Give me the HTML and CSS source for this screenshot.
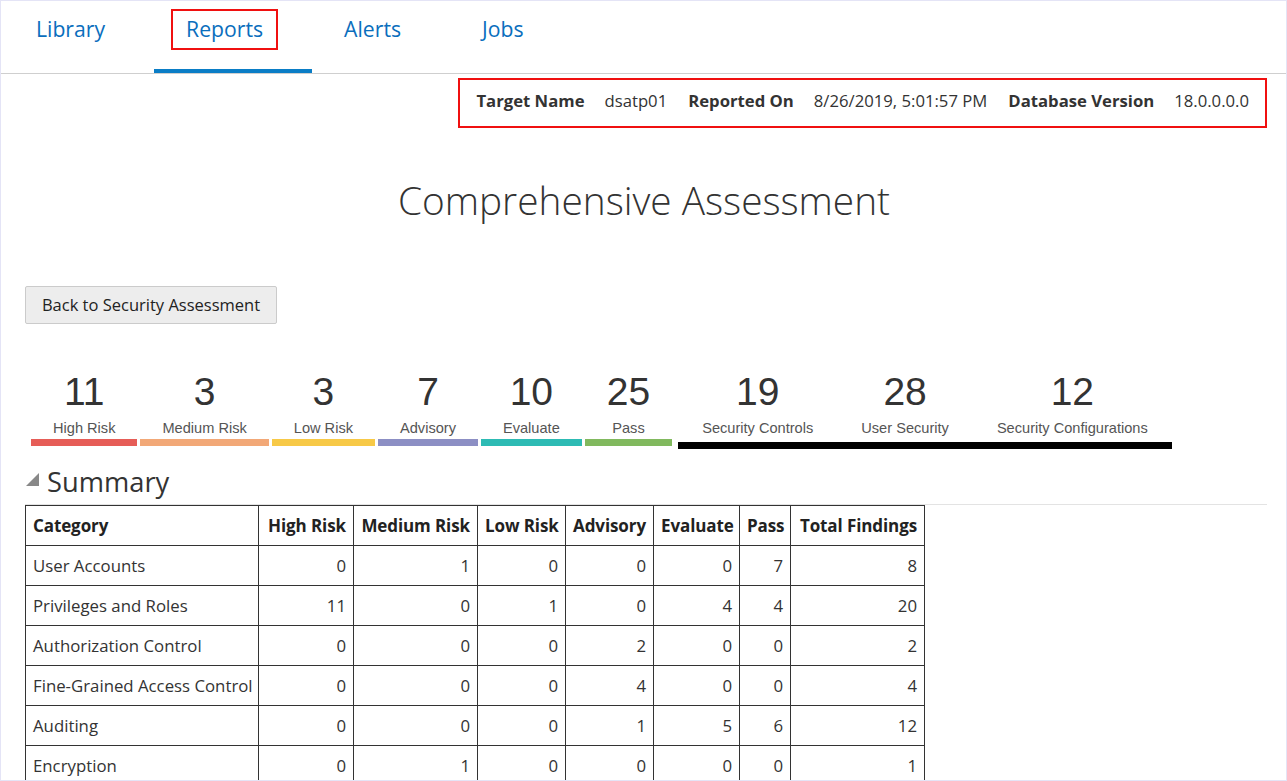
FILE: index.html
```html
<!DOCTYPE html>
<html lang="en">
<head>
<meta charset="utf-8">
<title>Comprehensive Assessment</title>
<link rel="stylesheet" href="styles.css">
</head>
<body>
<div class="page">
  <nav class="tabs">
    <a class="tab">Library</a>
    <a class="tab active"><span class="mark">Reports</span></a>
    <a class="tab">Alerts</a>
    <a class="tab">Jobs</a>
  </nav>
  <main class="content">
    <div class="info-row">
      <div class="info">
        <span class="lbl">Target Name</span><span class="val">dsatp01</span>
        <span class="lbl">Reported On</span><span class="val">8/26/2019, 5:01:57 PM</span>
        <span class="lbl">Database Version</span><span class="val last">18.0.0.0.0</span>
      </div>
    </div>
    <h1 class="title">Comprehensive Assessment</h1>
    <button class="back">Back to Security Assessment</button>
    <div class="stats">
      <div class="stat c-high"><div class="num">11</div><div class="cap">High Risk</div></div>
      <div class="stat c-med"><div class="num">3</div><div class="cap">Medium Risk</div></div>
      <div class="stat c-low"><div class="num">3</div><div class="cap">Low Risk</div></div>
      <div class="stat c-adv"><div class="num">7</div><div class="cap">Advisory</div></div>
      <div class="stat c-eval"><div class="num">10</div><div class="cap">Evaluate</div></div>
      <div class="stat c-pass"><div class="num">25</div><div class="cap">Pass</div></div>
      <div class="group">
        <div class="gstat"><div class="num">19</div><div class="cap">Security Controls</div></div>
        <div class="gstat"><div class="num">28</div><div class="cap">User Security</div></div>
        <div class="gstat"><div class="num">12</div><div class="cap">Security Configurations</div></div>
      </div>
    </div>
    <h2 class="section"><span class="tri"></span>Summary</h2>
    <table class="summary">
      <colgroup>
        <col class="w1"><col class="w2"><col class="w3"><col class="w4"><col class="w5"><col class="w6"><col class="w7"><col class="w8">
      </colgroup>
      <thead>
        <tr><th class="left">Category</th><th>High Risk</th><th>Medium Risk</th><th>Low Risk</th><th>Advisory</th><th>Evaluate</th><th>Pass</th><th>Total Findings</th></tr>
      </thead>
      <tbody>
        <tr><td class="left">User Accounts</td><td>0</td><td>1</td><td>0</td><td>0</td><td>0</td><td>7</td><td>8</td></tr>
        <tr><td class="left">Privileges and Roles</td><td>11</td><td>0</td><td>1</td><td>0</td><td>4</td><td>4</td><td>20</td></tr>
        <tr><td class="left">Authorization Control</td><td>0</td><td>0</td><td>0</td><td>2</td><td>0</td><td>0</td><td>2</td></tr>
        <tr><td class="left">Fine-Grained Access Control</td><td>0</td><td>0</td><td>0</td><td>4</td><td>0</td><td>0</td><td>4</td></tr>
        <tr><td class="left">Auditing</td><td>0</td><td>0</td><td>0</td><td>1</td><td>5</td><td>6</td><td>12</td></tr>
        <tr><td class="left">Encryption</td><td>0</td><td>1</td><td>0</td><td>0</td><td>0</td><td>0</td><td>1</td></tr>
      </tbody>
    </table>
  </main>
</div>
</body>
</html>
```
FILE: styles.css
```css
* { box-sizing: border-box; }
html, body { margin: 0; padding: 0; background: #fff; }
body { font-family: "Open Sans", "Noto Sans", "DejaVu Sans", sans-serif; color: #333; }

.page {
  width: 1287px;
  height: 781px;
  border: 1px solid #e4e4f6;
  overflow: hidden;
  background: #fff;
}

/* tabs */
.tabs {
  height: 73px;
  border-bottom: 1px solid #cfcfcf;
  display: flex;
  align-items: flex-start;
  padding-left: 35px;
  gap: 81px;
}
.tab {
  position: relative;
  display: block;
  height: 72px;
  padding-top: 13px;
  font-size: 21.2px;
  line-height: 30px;
  color: #0a6ebd;
}
.tab.active::after {
  content: "";
  position: absolute;
  left: -32px;
  width: 158px;
  bottom: 0;
  height: 4px;
  background: #0a7dc6;
}
.mark {
  display: inline-block;
  border: 2px solid #f01010;
  padding: 3px 13px 4px;
  margin: -5px -15px 0;
  line-height: 30px;
}

/* content */
.content { padding: 0 19px 0 24px; }

.info-row { display: flex; justify-content: flex-end; padding-top: 4px; }
.info {
  height: 50px;
  border: 2px solid #f01010;
  display: flex;
  align-items: center;
  padding: 0 16px 5px 16px;
  font-size: 16.7px;
  white-space: nowrap;
}
.info .lbl { font-weight: 700; margin-right: 20px; }
.info .val { margin-right: 21px; }
.info .val.last { margin-right: 0; }

.title {
  margin: 46px 0 0;
  text-align: center;
  font-weight: 300;
  font-size: 38.8px;
  line-height: 52px;
  color: #333;
  padding-right: 4px;
}

.back {
  display: block;
  margin-top: 60px;
  height: 38px;
  width: 252px;
  padding: 0 0 1px;
  background: #ededed;
  border: 1px solid #cbcbcb;
  border-radius: 2px;
  font-family: "Open Sans", "Noto Sans", sans-serif;
  font-size: 16.5px;
  color: #222;
}

/* stats */
.stats {
  display: flex;
  align-items: flex-start;
  margin-top: 48px;
  padding-left: 6px;
  font-family: "Liberation Sans", Arial, sans-serif;
}
.stat {
  padding: 0 22px;
  margin-right: 3px;
  text-align: center;
  border-bottom: 7px solid #ccc;
  white-space: nowrap;
}
.num {
  font-size: 39px;
  line-height: 40px;
  color: #333;
}
.cap {
  font-size: 14.6px;
  line-height: 18px;
  color: #555;
  padding-top: 7px;
  padding-bottom: 2px;
}
.c-high { border-bottom-color: #e65d57; }
.c-med  { border-bottom-color: #f2a877; }
.c-low  { border-bottom-color: #f7c947; }
.c-adv  { border-bottom-color: #8c8fc4; }
.c-eval { border-bottom-color: #2dbbb4; }
.c-pass { border-bottom-color: #81b95e; }

.group {
  display: flex;
  margin-left: 3px;
  border-bottom: 7px solid #000;
  padding-bottom: 5px;
}
.gstat {
  padding: 0 24px;
  text-align: center;
  white-space: nowrap;
}
.gstat .cap { padding-bottom: 0; }

/* summary */
.section {
  margin: 16px 0 0;
  font-weight: 400;
  font-size: 27.3px;
  line-height: 34px;
  color: #333;
  border-bottom: 1px solid #e3e3e3;
  display: flex;
  align-items: flex-start;
  height: 40px;
}
.tri {
  width: 0;
  height: 0;
  border-left: 13px solid transparent;
  border-bottom: 13px solid #888;
  margin: 8px 8px 0 1px;
}

.summary {
  border-collapse: collapse;
  table-layout: fixed;
  width: 899px;
  font-size: 16.8px;
}
.w1 { width: 233px; }
.w2 { width: 95px; }
.w3 { width: 124px; }
.w4 { width: 88px; }
.w5 { width: 88px; }
.w6 { width: 86px; }
.w7 { width: 51px; }
.w8 { width: 134px; }
.summary th, .summary td {
  border: 1px solid #333;
  height: 40px;
  padding: 0 7px 0 7px;
  text-align: right;
  white-space: nowrap;
  overflow: hidden;
}
.summary th { font-weight: 700; color: #222; font-size: 17px; letter-spacing: -0.1px; }
.summary td { color: #333; }
.summary .left { text-align: left; }
```
